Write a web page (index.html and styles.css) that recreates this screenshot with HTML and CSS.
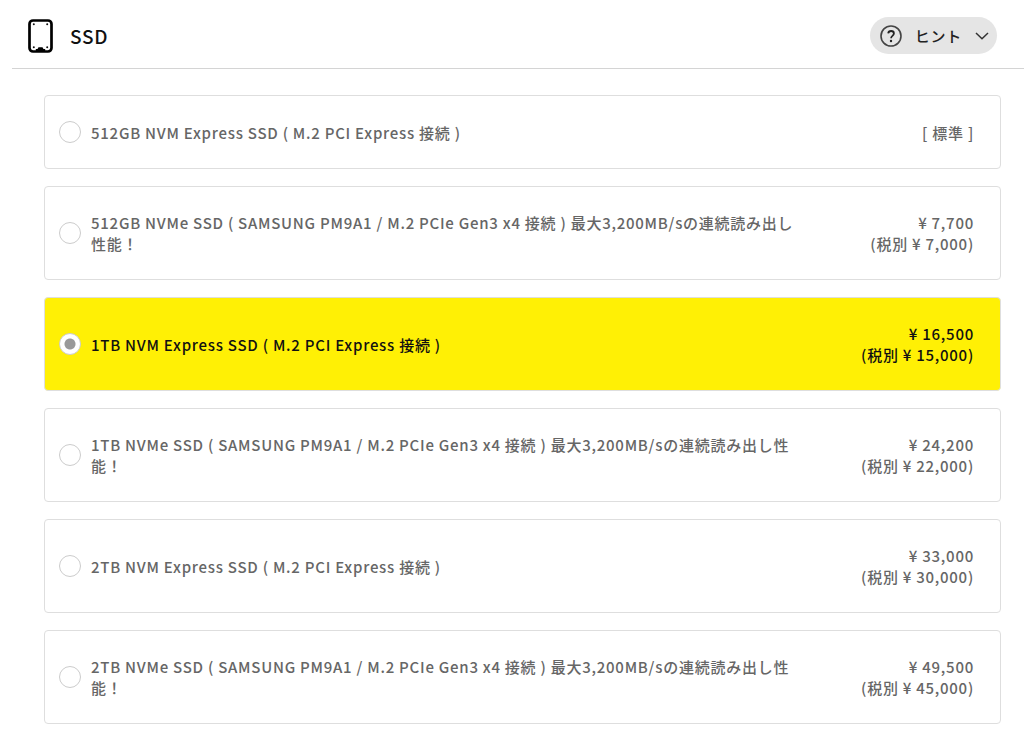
FILE: index.html
```
<!DOCTYPE html>
<html lang="ja">

<head>
    <meta charset="UTF-8">
    <meta name="viewport" content="width=device-width, initial-scale=1">
    <title>SSD</title>
    <link rel="stylesheet" href="styles.css">
</head>

<body>

    <section class="parts">
        <header class="parts_head">
            <svg class="parts_icon" width="25" height="34" viewBox="0 0 25 34" aria-hidden="true">
                <rect x="1.5" y="1.5" width="22" height="31" rx="3.5" fill="#fff" stroke="#000" stroke-width="2.7"/>
                <path d="M7.8 32v-2h1.7l1-1.8h4l1 1.8h1.7v2z" fill="#000"/>
                <g fill="#111">
                    <circle cx="5.8" cy="5.2" r="1"/>
                    <circle cx="19.2" cy="5.2" r="1"/>
                    <circle cx="5.8" cy="28.2" r="1"/>
                    <circle cx="19.2" cy="28.2" r="1"/>
                </g>
            </svg>
            <h2 class="parts_title">SSD</h2>
            <button type="button" class="hint">
                <svg width="22" height="22" viewBox="0 0 22 22" fill="none" stroke="#444" aria-hidden="true">
                    <circle cx="11" cy="11" r="10" stroke-width="1.6"/>
                    <path d="M8.2 8.4C8.4 6.8 9.5 6 11.1 6c1.7 0 2.8.9 2.8 2.4 0 1.2-.7 1.8-1.5 2.5-.9.7-1.3 1.2-1.3 2.4" stroke="#222" stroke-width="1.8"/>
                    <circle cx="11" cy="16" r="1.2" fill="#222" stroke="none"/>
                </svg>
                <span class="hint_text">ヒント</span>
                <svg width="14" height="8" viewBox="0 0 14 8" fill="none" stroke="#333" stroke-width="1.5" aria-hidden="true">
                    <path d="M1 1l6 5.8L13 1"/>
                </svg>
            </button>
        </header>

        <form class="options" action="#">
            <label class="option">
                <input type="radio" name="ssd" value="1">
                <span class="option_name">512GB NVM Express SSD ( M.2 PCI Express 接続 )</span>
                <span class="option_price">[ 標準 ]</span>
            </label>

            <label class="option">
                <input type="radio" name="ssd" value="2">
                <span class="option_name">512GB NVMe SSD ( SAMSUNG PM9A1 / M.2 PCIe Gen3 x4 接続 ) 最大3,200MB/sの連続読み出し性能！</span>
                <span class="option_price">¥ 7,700<br>(税別 ¥ 7,000)</span>
            </label>

            <label class="option">
                <input type="radio" name="ssd" value="3" checked>
                <span class="option_name">1TB NVM Express SSD ( M.2 PCI Express 接続 )</span>
                <span class="option_price">¥ 16,500<br>(税別 ¥ 15,000)</span>
            </label>

            <label class="option">
                <input type="radio" name="ssd" value="4">
                <span class="option_name">1TB NVMe SSD ( SAMSUNG PM9A1 / M.2 PCIe Gen3 x4 接続 ) 最大3,200MB/sの連続読み出し性能！</span>
                <span class="option_price">¥ 24,200<br>(税別 ¥ 22,000)</span>
            </label>

            <label class="option">
                <input type="radio" name="ssd" value="5">
                <span class="option_name">2TB NVM Express SSD ( M.2 PCI Express 接続 )</span>
                <span class="option_price">¥ 33,000<br>(税別 ¥ 30,000)</span>
            </label>

            <label class="option">
                <input type="radio" name="ssd" value="6">
                <span class="option_name">2TB NVMe SSD ( SAMSUNG PM9A1 / M.2 PCIe Gen3 x4 接続 ) 最大3,200MB/sの連続読み出し性能！</span>
                <span class="option_price">¥ 49,500<br>(税別 ¥ 45,000)</span>
            </label>
        </form>
    </section>

</body>

</html>
```
FILE: styles.css
```
* {
    margin: 0;
    padding: 0;
    box-sizing: border-box;
}

body {
    background-color: #fff;
    color: #666;
    font-family: "Noto Sans CJK JP", sans-serif;
    font-size: 15px;
    font-weight: 500;
    line-height: 21px;
    letter-spacing: 0.05em;
}

.parts {
    padding-left: 12px;
}

/* heading bar with the hint button on the right */
.parts_head {
    display: flex;
    align-items: center;
    padding: 17px 27px 14px 16px;
    border-bottom: 1px solid #d4d4d4;
}

.parts_title {
    margin-left: 17px;
    color: #111;
    font-size: 19px;
    font-weight: 500;
    line-height: 30px;
}

.hint {
    display: flex;
    align-items: center;
    height: 37px;
    margin-left: auto;
    padding: 0 8px 0 10px;
    border: none;
    border-radius: 20px;
    background-color: #e5e5e5;
    color: #222;
    font: inherit;
    letter-spacing: inherit;
    cursor: pointer;
}

.hint_text {
    margin: 0 13px;
}

.options {
    display: flex;
    flex-direction: column;
    gap: 17px;
    padding: 26px 23px 20px 32px;
}

.option {
    display: flex;
    align-items: center;
    padding: 25px 26px 25px 14px;
    border: 1px solid #dedede;
    border-radius: 4px;
    cursor: pointer;
}

.option input {
    appearance: none;
    flex: none;
    width: 22px;
    height: 22px;
    margin-right: 10px;
    border: 1px solid #ccc;
    border-radius: 50%;
    background-color: #fff;
}

.option input:checked {
    background-image: radial-gradient(circle, #999 5px, transparent 6px);
}

.option_name {
    flex: 1;
}

.option_price {
    width: 170px;
    text-align: right;
}

/* the selected row */
.option:has(input:checked) {
    background-color: #fff005;
    color: #111;
}
```
